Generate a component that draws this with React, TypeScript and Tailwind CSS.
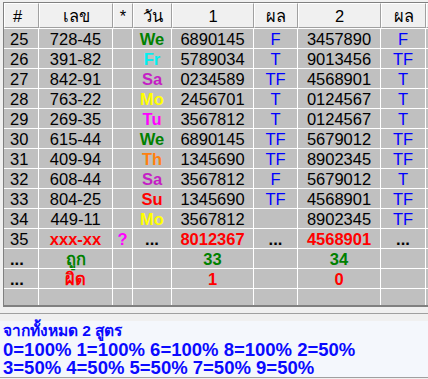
import React from "react";

type Cell = { t: string; c?: string; b?: boolean };

const widths = [35, 74, 20, 39, 82, 44, 83, 45, 40];
const aligns = ["left", "center", "center", "center", "center", "center", "center", "center", "center"];

const dayColor: Record<string, string> = {
  We: "#008000",
  Fr: "#00f0f0",
  Sa: "#c41fc4",
  Mo: "#ffff00",
  Tu: "#ff00ff",
  Th: "#ff8010",
  Su: "#ff0000",
};

const raw: [string, string, string, string, string, string, string][] = [
  ["25", "728-45", "We", "6890145", "F", "3457890", "F"],
  ["26", "391-82", "Fr", "5789034", "T", "9013456", "TF"],
  ["27", "842-91", "Sa", "0234589", "TF", "4568901", "T"],
  ["28", "763-22", "Mo", "2456701", "T", "0124567", "T"],
  ["29", "269-35", "Tu", "3567812", "T", "0124567", "T"],
  ["30", "615-44", "We", "6890145", "TF", "5679012", "TF"],
  ["31", "409-94", "Th", "1345690", "TF", "8902345", "TF"],
  ["32", "608-44", "Sa", "3567812", "F", "5679012", "T"],
  ["33", "804-25", "Su", "1345690", "TF", "4568901", "TF"],
  ["34", "449-11", "Mo", "3567812", "", "8902345", "TF"],
];

const BLUE = "#0000ff";
const RED = "#ff0000";
const GREEN = "#008000";

const rows: Cell[][] = [
  ...raw.map((r) => [
    { t: r[0] },
    { t: r[1] },
    { t: "" },
    { t: r[2], c: dayColor[r[2]], b: true },
    { t: r[3] },
    { t: r[4], c: BLUE },
    { t: r[5] },
    { t: r[6], c: BLUE },
    { t: "" },
  ]),
  [
    { t: "35" },
    { t: "xxx-xx", c: RED, b: true },
    { t: "?", c: "#ff00ff", b: true },
    { t: "...", b: true },
    { t: "8012367", c: RED, b: true },
    { t: "...", b: true },
    { t: "4568901", c: RED, b: true },
    { t: "...", b: true },
    { t: "" },
  ],
  [
    { t: "...", b: true },
    { t: "ถูก", c: GREEN, b: true },
    { t: "" },
    { t: "" },
    { t: "33", c: GREEN, b: true },
    { t: "" },
    { t: "34", c: GREEN, b: true },
    { t: "" },
    { t: "" },
  ],
  [
    { t: "...", b: true },
    { t: "ผิด", c: RED, b: true },
    { t: "" },
    { t: "" },
    { t: "1", c: RED, b: true },
    { t: "" },
    { t: "0", c: RED, b: true },
    { t: "" },
    { t: "" },
  ],
];

const headers = ["#", "เลข", "*", "วัน", "1", "ผล", "2", "ผล", ""];

const FONT = '"Liberation Sans", Tahoma, "Noto Sans", "DejaVu Sans", sans-serif';

export default function App() {
  return (
    <div
      className="w-[428px] h-[379px] overflow-hidden bg-[#f0f0f0] text-black"
      style={{ fontFamily: FONT }}
    >
      <div className="pt-[2px] pl-[3px]">
        <div className="w-[480px] h-[305px] overflow-hidden border-l border-t border-b-2 border-l-[#808080] border-t-[#808080] border-b-[#808080] bg-[#c0c0c0]">
          {/* header */}
          <div className="flex h-[25px] bg-[#f0f0f0]">
            {headers.map((h, i) => (
              <div
                key={i}
                className={`shrink-0 h-[25px] border-t border-l border-t-white border-l-white border-r border-b border-r-[#a0a0a0] border-b-[#a0a0a0] text-[16.5px] leading-[25px] whitespace-nowrap ${
                  i === 0 ? "text-left pl-[8px]" : "text-center"
                }`}
                style={{ width: widths[i] }}
              >
                {h}
              </div>
            ))}
          </div>
          {rows.map((r, ri) => (
            <div key={ri} className="flex h-[20px]">
              {r.map((c, ci) => (
                <div
                  key={ci}
                  className={`shrink-0 h-[20px] border-t border-r border-white text-[16.5px] leading-[21px] whitespace-nowrap ${
                    aligns[ci] === "left" ? "text-left pl-[6px]" : "text-center"
                  } ${c.b ? "font-bold" : "font-normal"}`}
                  style={{ width: widths[ci], color: c.c ?? "#000" }}
                >
                  {c.t}
                </div>
              ))}
            </div>
          ))}
          <div className="flex h-[17px]">
            {widths.map((w, i) => (
              <div
                key={i}
                className="shrink-0 h-[17px] border-t border-r border-white"
                style={{ width: w }}
              />
            ))}
          </div>
        </div>
      </div>
      <div className="h-[6px]" />
      <div className="h-[8px] border-t border-[#a0a0a0]" />
      <div className="h-[56px] bg-[#f4f7fc] pl-[3px] text-[#0a0aff] font-bold">
        <div className="h-[19px] text-[15.5px] leading-[20px] whitespace-nowrap">
          จากทั้งหมด 2 สูตร
        </div>
        <div className="h-[19px] text-[18.5px] leading-[19px] whitespace-nowrap">
          0=100% 1=100% 6=100% 8=100% 2=50%
        </div>
        <div className="h-[18px] text-[18.5px] leading-[18px] whitespace-nowrap">
          3=50% 4=50% 5=50% 7=50% 9=50%
        </div>
      </div>
      <div className="border-t border-[#a0a0a0]" />
    </div>
  );
}
